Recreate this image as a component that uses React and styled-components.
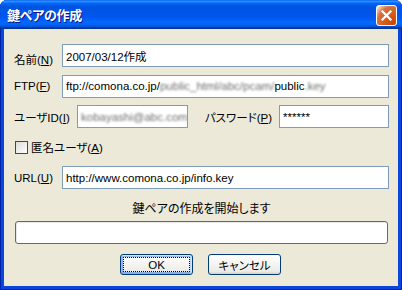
import styled, { createGlobalStyle } from "styled-components"

const Global = createGlobalStyle`
  html, body {
    margin: 0;
    background: #ffffff;
  }
`

const FONT = `"Liberation Sans", "Noto Sans CJK JP", sans-serif`

const Window = styled.div`
  width: 402px;
  height: 290px;
  box-sizing: border-box;
  display: flex;
  flex-direction: column;
  background: #0846dc;
  border-radius: 7px 7px 0 0;
  overflow: hidden;
  box-shadow: inset 1px 0 #0024a8, inset -1px 0 #0024a8, inset 0 -1px #0024a8;
  font-family: ${FONT};
  font-size: 11.5px;
  color: #000;
`

const TitleBar = styled.div`
  height: 29px;
  flex-shrink: 0;
  display: flex;
  align-items: center;
  justify-content: space-between;
  padding: 0 5px 0 7px;
  background: linear-gradient(180deg, #0058ee 0%, #3593ff 4%, #288eff 6%, #127dff 8%, #036ffc 10%,
    #0262ee 14%, #0057e5 20%, #0054e3 24%, #0055eb 56%, #005bf5 66%, #026afe 76%,
    #0062ef 86%, #0052d6 92%, #0040ab 94%, #003092 100%);
`

const Title = styled.div`
  color: #fff;
  font-family: "Noto Sans CJK JP", sans-serif;
  font-weight: bold;
  font-size: 13px;
  letter-spacing: -0.3px;
  text-shadow: 1px 1px #0f1089;
  font-feature-settings: "palt";
`

const CloseButton = styled.div`
  width: 21px;
  height: 21px;
  margin-top: 2px;
  box-sizing: border-box;
  border: 1px solid #fff;
  border-radius: 3px;
  display: flex;
  align-items: center;
  justify-content: center;
  background: radial-gradient(circle at 90% 90%, #cc4600 0%, #dc6527 55%, #cd7546 70%, #ffccb2 90%, #fff 100%);
`

const Body = styled.div`
  flex: 1;
  margin: 0 4px 4px;
  background: #ece9d8;
  padding: 15px 9px 0 10px;
  display: flex;
  flex-direction: column;
`

const Form = styled.div`
  display: flex;
  flex-direction: column;
  gap: 7.5px;
`

const Row = styled.div`
  display: flex;
  align-items: center;
  height: 23px;
`

const Label = styled.span`
  width: ${p => p.$width || 48}px;
  flex-shrink: 0;
  white-space: nowrap;
  font-feature-settings: "palt";
  padding-top: ${p => p.$drop || 0}px;
`

const RightLabel = styled.span`
  flex: 1;
  text-align: right;
  padding-right: 7px;
  white-space: nowrap;
  font-feature-settings: "palt";
`

const Key = styled.u`
  text-decoration: underline;
`

const Field = styled.div`
  height: 23px;
  box-sizing: border-box;
  flex: ${p => (p.$width ? "none" : 1)};
  width: ${p => (p.$width ? `${p.$width}px` : "auto")};
  border: 1px solid #7f9db9;
  background: #fff;
  padding: 0 3px;
  display: flex;
  align-items: center;
  white-space: nowrap;
  overflow: hidden;
`

const Hidden = styled.span`
  color: #6e6e6e;
  filter: blur(0.8px);
`

const CheckRow = styled.label`
  display: flex;
  align-items: center;
  gap: 3px;
  height: 23px;
  padding-left: 1px;
  font-feature-settings: "palt";
`

const CheckBox = styled.span`
  width: 13px;
  height: 13px;
  box-sizing: border-box;
  border: 1px solid #1c5180;
  background: linear-gradient(135deg, #dcdcd7 0%, #ffffff 100%);
`

const Status = styled.div`
  margin-top: 12px;
  line-height: 14px;
  text-align: center;
  font-family: "Noto Sans CJK JP", sans-serif;
  font-size: 12px;
  font-feature-settings: "palt";
`

const Progress = styled.div`
  margin: 6px 1px 0 1px;
  height: 23px;
  box-sizing: border-box;
  border: 1px solid #686868;
  border-radius: 3px;
  background: #fff;
  box-shadow: inset 1px 1px #e8e8e8;
`

const Buttons = styled.div`
  margin-top: 10px;
  display: flex;
  justify-content: center;
  gap: 15px;
  padding-right: 2px;
`

const Button = styled.button`
  position: relative;
  width: 73px;
  height: 21px;
  box-sizing: border-box;
  border: 1px solid #003c74;
  border-radius: 3px;
  background: linear-gradient(180deg, #fff 0%, #ecebe6 86%, #d6d0c5 100%);
  box-shadow: ${p => p.$focused
    ? "inset -1px 1px #cee7ff, inset 1px 2px #98b8ea, inset -2px 2px #bcd4f6, inset 1px -1px #89ade4, inset 2px -2px #89ade4"
    : "none"};
  font-family: ${FONT};
  font-size: 11.5px;
  color: #000;
  padding: 0;
  font-feature-settings: "palt";
  outline: ${p => (p.$focused ? "1px dotted #000" : "none")};
  outline-offset: -4px;
`

const App = () => {
  return (
    <>
      <Global />
      <Window>
        <TitleBar>
          <Title>鍵ペアの作成</Title>
          <CloseButton>
            <svg width="13" height="13" viewBox="0 0 13 13">
              <path d="M2.5 2.5 L10.5 10.5 M10.5 2.5 L2.5 10.5" stroke="#fff" strokeWidth="2.2" strokeLinecap="square" />
            </svg>
          </CloseButton>
        </TitleBar>
        <Body>
          <Form>
            <Row>
              <Label $drop={6}>名前(<Key>N</Key>)</Label>
              <Field>2007/03/12作成</Field>
            </Row>
            <Row>
              <Label>FTP(<Key>F</Key>)</Label>
              <Field>ftp://comona.co.jp/<Hidden>public_html/abc/pcam/</Hidden>public<Hidden>.key</Hidden></Field>
            </Row>
            <Row>
              <Label $width={63}>ユーザID(<Key>I</Key>)</Label>
              <Field $width={111}><Hidden>kobayashi@abc.com</Hidden></Field>
              <RightLabel>パスワード(<Key>P</Key>)</RightLabel>
              <Field $width={110}>******</Field>
            </Row>
            <CheckRow>
              <CheckBox />
              <span>匿名ユーザ(<Key>A</Key>)</span>
            </CheckRow>
            <Row>
              <Label>URL(<Key>U</Key>)</Label>
              <Field>http://www.comona.co.jp/info.key</Field>
            </Row>
          </Form>
          <Status>鍵ペアの作成を開始します</Status>
          <Progress />
          <Buttons>
            <Button $focused>OK</Button>
            <Button>キャンセル</Button>
          </Buttons>
        </Body>
      </Window>
    </>
  )
}

export default App
